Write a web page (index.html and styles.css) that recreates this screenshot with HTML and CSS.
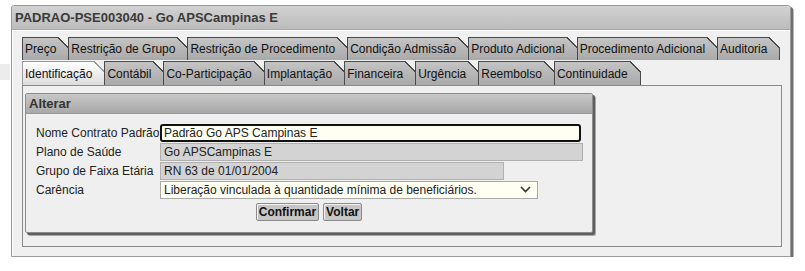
FILE: index.html
```html
<!DOCTYPE html>
<html lang="pt">
<head>
<meta charset="utf-8">
<title>PADRAO-PSE003040</title>
<link rel="stylesheet" href="styles.css">
</head>
<body>
<div class="page">
  <div class="side"><div class="ghost"></div></div>
  <div class="window">
    <div class="titlebar">PADRAO-PSE003040 - Go APSCampinas E</div>
    <div class="winbody">
      <div class="tabrow">
        <div class="tab">Preço</div>
        <div class="tab">Restrição de Grupo</div>
        <div class="tab">Restrição de Procedimento</div>
        <div class="tab">Condição Admissão</div>
        <div class="tab">Produto Adicional</div>
        <div class="tab">Procedimento Adicional</div>
        <div class="tab last">Auditoria</div>
      </div>
      <div class="tabrow second">
        <div class="tab active">Identificação</div>
        <div class="tab">Contábil</div>
        <div class="tab">Co-Participação</div>
        <div class="tab">Implantação</div>
        <div class="tab">Financeira</div>
        <div class="tab">Urgência</div>
        <div class="tab">Reembolso</div>
        <div class="tab last">Continuidade</div>
      </div>
      <div class="panel">
        <div class="fieldset">
          <div class="legend">Alterar</div>
          <div class="form">
            <div class="row">
              <div class="label">Nome Contrato Padrão</div>
              <div class="field edit w-full">Padrão <span class="sp">Go</span> <span class="sp">APS</span> Campinas E</div>
            </div>
            <div class="row">
              <div class="label">Plano de Saúde</div>
              <div class="field ro w-full2">Go APSCampinas E</div>
            </div>
            <div class="row">
              <div class="label">Grupo de Faixa Etária</div>
              <div class="field ro w-mid">RN 63 de 01/01/2004</div>
            </div>
            <div class="row">
              <div class="label">Carência</div>
              <div class="field select w-sel">
                <span>Liberação vinculada à quantidade mínima de beneficiários.</span>
                <svg class="chev" width="11" height="7" viewBox="0 0 11 7"><path d="M1 1 L5.5 5.5 L10 1" fill="none" stroke="#333" stroke-width="1.6"/></svg>
              </div>
            </div>
            <div class="buttons">
              <button class="btn">Confirmar</button>
              <button class="btn">Voltar</button>
            </div>
          </div>
        </div>
      </div>
    </div>
  </div>
</div>
</body>
</html>
```
FILE: styles.css
```css
html, body {
  margin: 0;
  padding: 0;
  background: #ffffff;
}
body {
  font-family: "Liberation Sans", Arial, sans-serif;
  font-size: 12px;
  color: #222;
}
.page {
  display: flex;
  padding-top: 5px;
}
.side {
  width: 11px;
  flex: none;
}
.ghost {
  width: 10px;
  height: 16px;
  margin-top: 59px;
  background: #ececec;
}
.window {
  width: 778px;
  flex: none;
  border: 1px solid #9a9a9a;
  border-radius: 3px 3px 0 0;
  box-shadow: 2px 2px 0 #6e6e6e, 3px 3px 0 #b8b8b8;
  background: #f0f0f0;
}
.titlebar {
  height: 23px;
  line-height: 23px;
  padding-left: 3px;
  font-size: 13px;
  font-weight: bold;
  color: #3a3a3a;
  background: linear-gradient(#d2d2d2, #bcbcbc);
  border-bottom: 1px solid #a8a8a8;
  border-radius: 3px 3px 0 0;
}
.winbody {
  padding: 7px 8px 9px 10px;
  box-shadow: inset 1px 1px 0 #ffffff;
}
.tabrow {
  display: flex;
  margin-bottom: 1px;
}
.tabrow.second {
  margin-bottom: 0;
}
.tab {
  position: relative;
  flex: none;
  height: 22px;
  line-height: 22px;
  padding: 0 12px 0 2px;
  border-top: 1px solid #4a4a4a;
  border-left: 1px solid #4a4a4a;
  background: linear-gradient(#c4c4c4, #a9a9a9);
  color: #111;
  white-space: nowrap;
}
.tab.last {
  border-right: 1px solid #4a4a4a;
}
.tab::after {
  content: "";
  position: absolute;
  top: -1px;
  right: -1px;
  width: 11px;
  height: 11px;
  background: linear-gradient(to bottom left, #f0f0f0 calc(50% - 0.5px), #4a4a4a calc(50% - 0.5px), #4a4a4a calc(50% + 0.8px), transparent calc(50% + 0.8px));
}
.tabrow.second .tab {
  height: 23px;
  line-height: 24px;
}
.tab.active {
  background: linear-gradient(#ffffff, #dcdcdc);
  border-color: #9a9a9a;
}
.tab.active::after {
  background: linear-gradient(to bottom left, #f0f0f0 calc(50% - 0.5px), #9a9a9a calc(50% - 0.5px), #9a9a9a calc(50% + 0.8px), transparent calc(50% + 0.8px));
}
.panel {
  height: 153px;
  border: 1px solid #8a8a8a;
  background: #f0f0f0;
  padding: 7px 0 0 2px;
}
.fieldset {
  width: 566px;
  height: 138px;
  border: 1px solid #8c8c8c;
  border-radius: 2px;
  box-shadow: 2px 2px 0 #5e5e5e, 3px 3px 0 #a8a8a8;
  background: #efefef;
}
.legend {
  height: 19px;
  line-height: 19px;
  padding-left: 3px;
  font-weight: bold;
  font-size: 13px;
  color: #333;
  background: linear-gradient(#c8c8c8, #a8a8a8);
  border-bottom: 1px solid #9a9a9a;
}
.form {
  padding: 9px 0 0 10px;
  display: flex;
  flex-direction: column;
}
.row {
  display: flex;
  align-items: center;
  height: 19px;
}
.label {
  width: 124px;
  flex: none;
  color: #222;
  white-space: nowrap;
}
.field {
  box-sizing: border-box;
  height: 18px;
  line-height: 16px;
  padding-left: 3px;
  white-space: nowrap;
  overflow: hidden;
  color: #222;
}
.edit {
  background: #fffff2;
  border: 2px solid #111;
  border-radius: 3px;
  line-height: 14px;
  padding-left: 2px;
}
.sp {
  text-decoration: underline wavy #e03030;
  text-decoration-thickness: 1px;
  text-underline-offset: 2px;
}
.ro {
  background: #d3d3d3;
  border: 1px solid #b0b0b0;
}
.select {
  display: flex;
  align-items: center;
  justify-content: space-between;
  background: #fffff2;
  border: 1px solid #a9a9a9;
  padding-right: 6px;
}
.chev {
  flex: none;
}
.w-full { width: 421px; }
.w-full2 { width: 423px; }
.w-mid { width: 344px; }
.w-sel { width: 378px; }
.buttons {
  display: flex;
  justify-content: center;
  gap: 4px;
  margin-top: 4px;
  padding-right: 10px;
}
.btn {
  font-family: "Liberation Sans", Arial, sans-serif;
  font-size: 12px;
  font-weight: bold;
  color: #111;
  height: 18px;
  padding: 0 2px;
  background: #c6c6c6;
  border: 1px solid #8a8a8a;
  box-shadow: inset 1px 1px 0 #f4f4f4;
  border-radius: 2px;
}
```
